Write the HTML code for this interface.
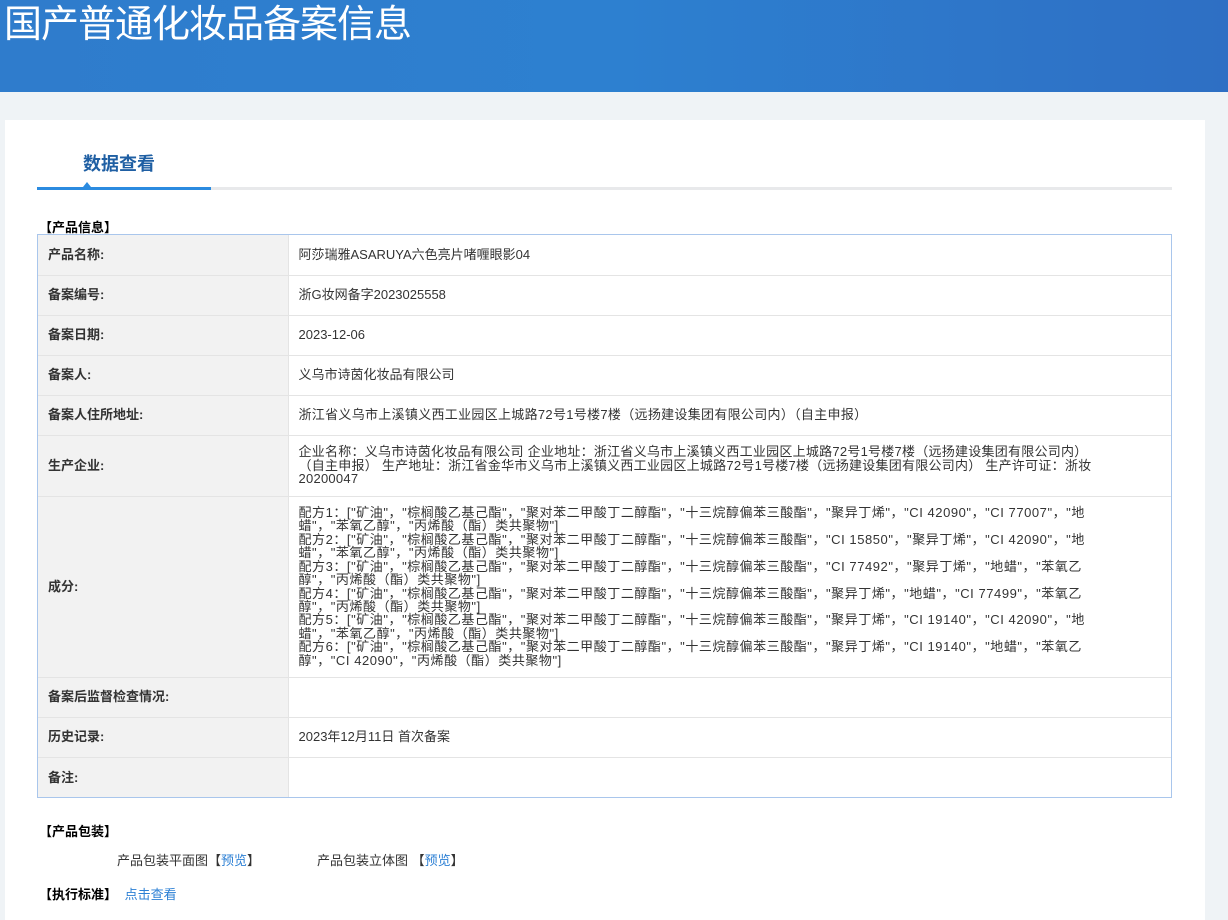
<!DOCTYPE html>
<html><head><meta charset="utf-8"><style>
*{margin:0;padding:0;box-sizing:border-box}
body{width:1228px;height:914px;overflow:hidden;background:#eff3f6;font-family:"Liberation Sans","Noto Sans CJK SC",sans-serif;color:#333;font-size:13px}
.hd{height:92px;background:linear-gradient(90deg,#2f7ccc 0%,#2d80d0 50%,#2e6fc4 100%);position:relative;overflow:hidden}
.hd h1{position:absolute;left:4px;top:-7px;font-size:38px;font-weight:normal;color:#fff;letter-spacing:-1px}
.card{position:absolute;left:5px;top:120px;width:1200px;height:800px;background:#fff}
.tab{position:absolute;left:32px;top:28px;width:1135px;height:42px;border-bottom:3px solid #e8e9eb}
.tab span{position:absolute;left:46px;top:2px;font-size:18px;font-weight:bold;color:#1f5fa3}
.tab i{position:absolute;left:0;bottom:-3px;width:174px;height:3px;background:#2b8be0}
.tab b{position:absolute;left:46px;bottom:0;border:4px solid transparent;border-bottom:5px solid #2b8be0;border-top:0}
.sec{position:absolute;font-size:13px;font-weight:bold;color:#000}
.tw{position:absolute;left:32px;top:114px;width:1135px;border:1px solid #a9c6ec}
table{width:100%;border-collapse:collapse}
td{border:1px solid #e4e4e4;padding:0 10px;font-size:13px;line-height:13.4px;vertical-align:middle;white-space:nowrap}
tr:first-child td{border-top:0}
tr:last-child td{border-bottom:0}
td:first-child{border-left:0}
td:last-child{border-right:0}
td.l{width:250px;background:#f2f2f2;font-weight:bold;color:#333}
tr{height:40px}
a{color:#2b7fd4;text-decoration:none}
</style></head><body>
<div class="hd"><h1>国产普通化妆品备案信息</h1></div>
<div class="card">
<div class="tab"><span>数据查看</span><i></i><b></b></div>
<div class="sec" style="left:34px;top:97px">【产品信息】</div>
<div class="tw"><table>
<tr><td class="l">产品名称:</td><td>阿莎瑞雅ASARUYA六色亮片啫喱眼影04</td></tr>
<tr><td class="l">备案编号:</td><td>浙G妆网备字2023025558</td></tr>
<tr><td class="l">备案日期:</td><td>2023-12-06</td></tr>
<tr><td class="l">备案人:</td><td>义乌市诗茵化妆品有限公司</td></tr>
<tr><td class="l">备案人住所地址:</td><td style="letter-spacing:0.3px">浙江省义乌市上溪镇义西工业园区上城路72号1号楼7楼（远扬建设集团有限公司内）（自主申报）</td></tr>
<tr style="height:61px"><td class="l">生产企业:</td><td style="letter-spacing:0.25px">企业名称：义乌市诗茵化妆品有限公司 企业地址：浙江省义乌市上溪镇义西工业园区上城路72号1号楼7楼（远扬建设集团有限公司内）<br>（自主申报） 生产地址：浙江省金华市义乌市上溪镇义西工业园区上城路72号1号楼7楼（远扬建设集团有限公司内） 生产许可证：浙妆<br>20200047</td></tr>
<tr style="height:181px"><td class="l">成分:</td><td style="letter-spacing:0.55px">配方1：["矿油"，"棕榈酸乙基己酯"，"聚对苯二甲酸丁二醇酯"，"十三烷醇偏苯三酸酯"，"聚异丁烯"，"CI 42090"，"CI 77007"，"地<br>蜡"，"苯氧乙醇"，"丙烯酸（酯）类共聚物"]<br>配方2：["矿油"，"棕榈酸乙基己酯"，"聚对苯二甲酸丁二醇酯"，"十三烷醇偏苯三酸酯"，"CI 15850"，"聚异丁烯"，"CI 42090"，"地<br>蜡"，"苯氧乙醇"，"丙烯酸（酯）类共聚物"]<br>配方3：["矿油"，"棕榈酸乙基己酯"，"聚对苯二甲酸丁二醇酯"，"十三烷醇偏苯三酸酯"，"CI 77492"，"聚异丁烯"，"地蜡"，"苯氧乙<br>醇"，"丙烯酸（酯）类共聚物"]<br>配方4：["矿油"，"棕榈酸乙基己酯"，"聚对苯二甲酸丁二醇酯"，"十三烷醇偏苯三酸酯"，"聚异丁烯"，"地蜡"，"CI 77499"，"苯氧乙<br>醇"，"丙烯酸（酯）类共聚物"]<br>配方5：["矿油"，"棕榈酸乙基己酯"，"聚对苯二甲酸丁二醇酯"，"十三烷醇偏苯三酸酯"，"聚异丁烯"，"CI 19140"，"CI 42090"，"地<br>蜡"，"苯氧乙醇"，"丙烯酸（酯）类共聚物"]<br>配方6：["矿油"，"棕榈酸乙基己酯"，"聚对苯二甲酸丁二醇酯"，"十三烷醇偏苯三酸酯"，"聚异丁烯"，"CI 19140"，"地蜡"，"苯氧乙<br>醇"，"CI 42090"，"丙烯酸（酯）类共聚物"]</td></tr>
<tr><td class="l">备案后监督检查情况:</td><td></td></tr>
<tr><td class="l">历史记录:</td><td>2023年12月11日 首次备案</td></tr>
<tr><td class="l">备注:</td><td></td></tr>
</table></div>
<div class="sec" style="left:34px;top:701px">【产品包装】</div>
<div style="position:absolute;left:112px;top:730px">产品包装平面图【<a>预览</a>】</div>
<div style="position:absolute;left:312px;top:730px">产品包装立体图 【<a>预览</a>】</div>
<div class="sec" style="left:34px;top:764px">【执行标准】 <a style="font-weight:normal;margin-left:4px">点击查看</a></div>
</div>
</body></html>
